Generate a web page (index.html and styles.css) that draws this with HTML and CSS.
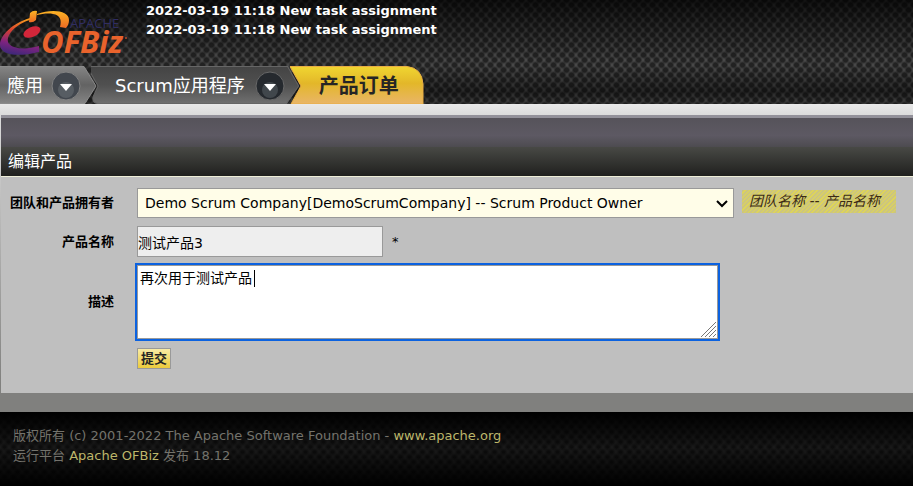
FILE: index.html
```html
<!DOCTYPE html>
<html lang="zh">
<head>
<meta charset="utf-8">
<title>编辑产品</title>
<link rel="stylesheet" href="styles.css">
</head>
<body>
<header class="masthead">
  <div class="banner">
    <svg class="logo" viewBox="0 0 132 66" role="img" aria-label="Apache OFBiz">
      <defs>
        <linearGradient id="swoosh" x1="0.5" y1="0" x2="0.3" y2="1">
          <stop offset="0" stop-color="#f99c1d"/>
          <stop offset="0.35" stop-color="#d9412f"/>
          <stop offset="0.7" stop-color="#7d2380"/>
          <stop offset="1" stop-color="#3a2878"/>
        </linearGradient>
        <linearGradient id="hook" x1="0" y1="0" x2="0" y2="1">
          <stop offset="0" stop-color="#fbb324"/>
          <stop offset="1" stop-color="#ef6a23"/>
        </linearGradient>
      </defs>
      <path fill="url(#swoosh)" d="M30 18C13 23 0 35 0 45C0 54 15 58 39 52L39 46C26 50 14 49 9 44C4 36 16 24 30 20Z"/>
      <path fill="url(#hook)" d="M37 14C51 9 69 10 69 20C69 23 68 26 66 28L60 27C62 20 60 15 53 14C48 13 42 14 37 15Z"/>
      <path fill="url(#hook)" d="M30 13Q33 10 37 11L36 20Q33 23 29 22Z"/>
      <ellipse cx="32" cy="32" rx="9" ry="5" transform="rotate(-24 32 32)" fill="#d3263a"/>
      <text class="logo-apache" x="70" y="28">APACHE</text>
      <text class="logo-name" x="41" y="53">OFBiz</text>
      <circle cx="126" cy="38" r="1" fill="#b64b2c"/>
    </svg>
    <ul class="notices">
      <li>2022-03-19 11:18 New task assignment</li>
      <li>2022-03-19 11:18 New task assignment</li>
    </ul>
  </div>
  <nav class="tabs">
    <a class="tab tab-apps" href="#">
      <svg class="tab-shape" viewBox="0 0 98 38" preserveAspectRatio="none" aria-hidden="true"><path fill="url(#g1)" stroke="#8b8b8b" d="M-2 .5H84L96 20L85 37.500H-2Z"/><defs><linearGradient id="g1" x2="0" y2="1"><stop stop-color="#858585"/><stop offset=".5" stop-color="#636363"/><stop offset="1" stop-color="#858585"/></linearGradient></defs></svg>
      <span>應用</span>
      <svg class="arrow" viewBox="0 0 30 30" aria-hidden="true"><circle cx="15" cy="15" r="14" fill="#42474e" stroke="#838383"/><circle cx="15" cy="19" r="8" fill="#666c72" opacity=".6"/><path fill="#fff" d="M9 13H21L15 20Z"/></svg>
    </a>
    <a class="tab tab-scrum" href="#">
      <svg class="tab-shape" viewBox="0 0 208 38" preserveAspectRatio="none" aria-hidden="true"><path fill="url(#g2)" stroke="#666" d="M-4 .5H196L207 20L195 37.500H7Q1 37 2 31L7 20Z"/><defs><linearGradient id="g2" x2="0" y2="1"><stop stop-color="#444"/><stop offset=".5" stop-color="#505050"/><stop offset="1" stop-color="#707070"/></linearGradient></defs></svg>
      <span>Scrum应用程序</span>
      <svg class="arrow" viewBox="0 0 30 30" aria-hidden="true"><circle cx="15" cy="15" r="14" fill="#25292e" stroke="#686868"/><circle cx="15" cy="19" r="8" fill="#555b61" opacity=".6"/><path fill="#fff" d="M9 13H21L15 20Z"/></svg>
    </a>
    <a class="tab tab-current" href="#">
      <svg class="tab-shape" viewBox="0 0 134 38" preserveAspectRatio="none" aria-hidden="true"><path fill="url(#g3)" stroke="#e8ad43" d="M0 .5H117Q132 2 133 18V38H1L11 20Z"/><defs><linearGradient id="g3" x2="0" y2="1"><stop stop-color="#f0d631"/><stop offset=".45" stop-color="#e3b729"/><stop offset="1" stop-color="#e9b568"/></linearGradient></defs></svg>
      <span>产品订单</span>
    </a>
  </nav>
</header>
<main class="content">
  <section class="panel">
    <div class="panel-bar"></div>
    <h1 class="panel-title">编辑产品</h1>
    <form class="form">
      <label class="label" for="owner">团队和产品拥有者</label>
      <div class="field">
        <div class="select-box">
          <select id="owner" class="owner"><option>Demo Scrum Company[DemoScrumCompany] -- Scrum Product Owner</option></select>
          <svg class="chevron" viewBox="0 0 12 8" aria-hidden="true"><path d="M1 1L6 6L11 1" fill="none" stroke="#000" stroke-width="2"/></svg>
        </div>
        <span class="hint">团队名称 -- 产品名称</span>
      </div>
      <label class="label" for="name">产品名称</label>
      <div class="field"><input id="name" class="name" type="text" value="测试产品3"><span class="required">*</span></div>
      <label class="label" for="description">描述</label>
      <div class="field">
        <div class="description-box">
          <textarea id="description" class="description">再次用于测试产品</textarea>
          <span class="caret"></span>
          <svg class="grip" viewBox="0 0 15 15" aria-hidden="true"><path d="M0 15L15 0M4 15L15 4M8 15L15 8M12 15L15 12" stroke="#777" fill="none"/></svg>
        </div>
      </div>
      <div class="field actions"><button class="submit" type="submit">提交</button></div>
    </form>
  </section>
</main>
<footer class="footer">
  <p>版权所有 (c) 2001-2022 The Apache Software Foundation - <a href="#">www.apache.org</a></p>
  <p>运行平台 <a href="#">Apache OFBiz</a> 发布 18.12</p>
</footer>
</body>
</html>
```
FILE: styles.css
```css
* { box-sizing: border-box; }
body {
  margin: 0;
  min-height: 100vh;
  display: flex;
  flex-direction: column;
  background: #80807e;
  color: #000;
  font: 13px/20px "DejaVu Sans", "Noto Sans CJK SC", sans-serif;
}
a { text-decoration: none; }
.masthead {
  background-color: #484848;
  background-image:
    linear-gradient(rgba(0,0,0,.75), rgba(0,0,0,0) 60px, rgba(0,0,0,0) 66px, rgba(0,0,0,.45) 92px, rgba(0,0,0,.1)),
    radial-gradient(circle, #222 2px, transparent 4px),
    radial-gradient(circle, #222 2px, transparent 4px);
  background-size: auto, 9px 10px, 9px 10px;
  background-position: 0 0, 0 0, 4px 5px;
}
.banner { display: flex; height: 66px; }
.logo { width: 132px; height: 66px; flex: none; }
.logo-apache { font: 13px "Open Sans", sans-serif; fill: #302d62; }
.logo-name { font: italic bold 31px "Open Sans", sans-serif; fill: #e9632c; }
.notices {
  margin: 0;
  padding: 1px 0 0 14px;
  list-style: none;
  color: #fff;
  font-weight: bold;
  line-height: 19px;
}
.tabs { display: flex; height: 38px; }
.tab {
  position: relative;
  display: flex;
  align-items: center;
  padding-top: 2px;
  color: #fff;
  font-size: 18px;
}
.tab span, .arrow { position: relative; }
.tab-shape { position: absolute; inset: 0; width: 100%; height: 100%; }
.arrow { width: 30px; height: 30px; }
.tab-apps { padding-right: 17px; padding-left: 7px; gap: 8px; }
.tab-scrum { padding-right: 15px; padding-left: 24px; gap: 10px; margin-left: -7px; }
.tab-current { padding-right: 25px; padding-left: 29px; margin-left: -10px; color: #252525; font-size: 20px; font-weight: bold; }
.content {
  padding: 11px 0 19px 1px;
  background: linear-gradient(#e9e9e9, #dcdcdc 11px, #80807e 280px);
}
.panel { background: #bfbfbf; }
.panel-bar {
  height: 32px;
  border-top: 3px solid #93919a;
  background: linear-gradient(#56535a, #5d5963 60%, #4d4b50);
}
.panel-title {
  margin: 0;
  padding: 0 7px;
  border-bottom: 1px solid #eeeed8;
  background: linear-gradient(#484945, #20201e);
  color: #fff;
  font-size: 16px;
  font-weight: normal;
  line-height: 29px;
}
.form {
  display: grid;
  grid-template-columns: 113px 1fr;
  column-gap: 23px;
  row-gap: 8px;
  align-items: center;
  padding: 11px 0 24px;
}
.label { text-align: right; font-weight: bold; }
.field { display: flex; align-items: center; }
.owner, .name, .description {
  border: 1px solid #999;
  border-radius: 0;
  color: #000;
  font: 14px/20px "DejaVu Sans", "Noto Sans CJK SC", sans-serif;
}
.select-box, .description-box { position: relative; }
.owner {
  display: block;
  appearance: none;
  width: 597px;
  height: 30px;
  padding: 0 7px;
  background: #fffde8;
}
.chevron {
  position: absolute;
  right: 6px;
  top: 12px;
  width: 12px;
  height: 8px;
  pointer-events: none;
}
.hint {
  margin: 0 0 3px 8px;
  padding: 0 16px 0 7px;
  font-size: 14px;
  line-height: 23px;
  font-style: italic;
  color: #3b2b14;
  background: repeating-linear-gradient(135deg, #cdc67c 0 2px, #dfd557 2px 3px);
}
.name { width: 246px; height: 31px; padding: 0; background: #eee; }
.required { margin-left: 9px; }
.description {
  display: block;
  width: 581px;
  height: 74px;
  padding: 2px;
  resize: none;
  outline: 2px solid #0b62e0;
  background: #fff;
}
.caret {
  position: absolute;
  left: 117px;
  top: 5px;
  width: 1px;
  height: 17px;
  background: #000;
}
.grip {
  position: absolute;
  right: 2px;
  bottom: 2px;
  width: 15px;
  height: 15px;
}
.actions { grid-column: 2; padding-top: 1px; }
.submit {
  height: 21px;
  padding: 0 3px;
  border: 1px solid #999;
  background: linear-gradient(#f8eba5, #eccb3b);
  color: #252525;
  font: bold 13px/17px "DejaVu Sans", "Noto Sans CJK SC", sans-serif;
}
.footer {
  flex: 1;
  padding: 14px 13px;
  color: #74736c;
  background-color: #242424;
  background-image:
    linear-gradient(#000, rgba(0,0,0,.3) 36px, #000),
    radial-gradient(circle, #121212 1px, transparent 4px),
    radial-gradient(circle, #121212 1px, transparent 4px);
  background-size: auto, 9px 10px, 9px 10px;
  background-position: 0 0, 0 0, 4px 5px;
}
.footer p { margin: 0; }
.footer a { color: #bdb76b; }
```
